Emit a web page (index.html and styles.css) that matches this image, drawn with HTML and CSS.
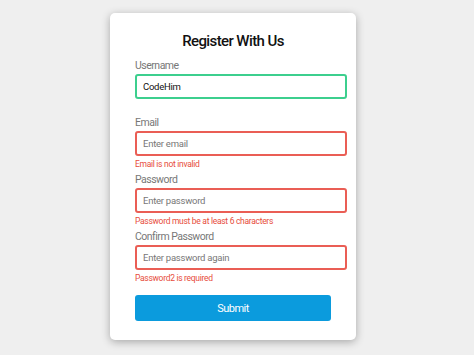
FILE: index.html
```html
<!DOCTYPE html>
<html lang="en">
<head>
<meta charset="utf-8">
<title>Register With Us</title>
<link rel="stylesheet" href="styles.css">
</head>
<body>
<div class="container">
  <form class="form">
    <h2 class="title">Register With Us</h2>
    <div class="form-control success">
      <label>Username</label>
      <input type="text" value="CodeHim">
      <small>Error message</small>
    </div>
    <div class="form-control error">
      <label>Email</label>
      <input type="text" placeholder="Enter email">
      <small>Email is not invalid</small>
    </div>
    <div class="form-control error">
      <label>Password</label>
      <input type="password" placeholder="Enter password">
      <small>Password must be at least 6 characters</small>
    </div>
    <div class="form-control error">
      <label>Confirm Password</label>
      <input type="password" placeholder="Enter password again">
      <small>Password2 is required</small>
    </div>
    <button type="button" class="submit">Submit</button>
  </form>
</div>
</body>
</html>
```
FILE: styles.css
```css
* { box-sizing: border-box; }
html, body { margin: 0; padding: 0; }
body {
  background: #efefef;
  font-family: Roboto, "Liberation Sans", Arial, sans-serif;
  width: 474px;
  height: 355px;
  overflow: hidden;
}
.container {
  margin: 13px 0 0 110px;
  width: 246px;
  background: #fff;
  border-radius: 5px;
  box-shadow: 0 2px 8px rgba(0, 0, 0, 0.3);
}
.form {
  padding: 16px 25px 19px 25px;
}
.title {
  margin: 0 0 6px;
  text-align: center;
  font-size: 15px;
  line-height: 24px;
  font-weight: 500;
  letter-spacing: -0.6px;
  color: #111;
}
.form-control {
  margin-bottom: 4px;
}
.form-control label {
  display: block;
  color: #777;
  font-size: 10.5px;
  letter-spacing: -0.5px;
  line-height: 14px;
  margin-bottom: 1px;
}
.form-control input {
  box-sizing: content-box;
  display: block;
  width: 100%;
  height: 21px;
  padding: 0 6px;
  border: 2px solid #f0f0f0;
  border-radius: 3px;
  font-family: inherit;
  font-size: 9.5px;
  letter-spacing: -0.25px;
  color: #111;
  outline: none;
}
.form-control input::placeholder { color: #777; }
.form-control small {
  display: block;
  visibility: hidden;
  margin-top: 3px;
  font-size: 8.5px;
  letter-spacing: -0.3px;
  line-height: 10px;
  color: #e74c3c;
}
.form-control.success input { border-color: #3ccf8e; }
.form-control.error input { border-color: #ea5e55; }
.form-control.error small { visibility: visible; }
.submit {
  display: block;
  width: 100%;
  height: 26px;
  margin-top: 12px;
  padding: 0;
  border: none;
  border-radius: 3px;
  background: #0b9bdd;
  color: #fff;
  font-family: inherit;
  font-size: 11px;
  letter-spacing: -0.5px;
  cursor: pointer;
}
```
